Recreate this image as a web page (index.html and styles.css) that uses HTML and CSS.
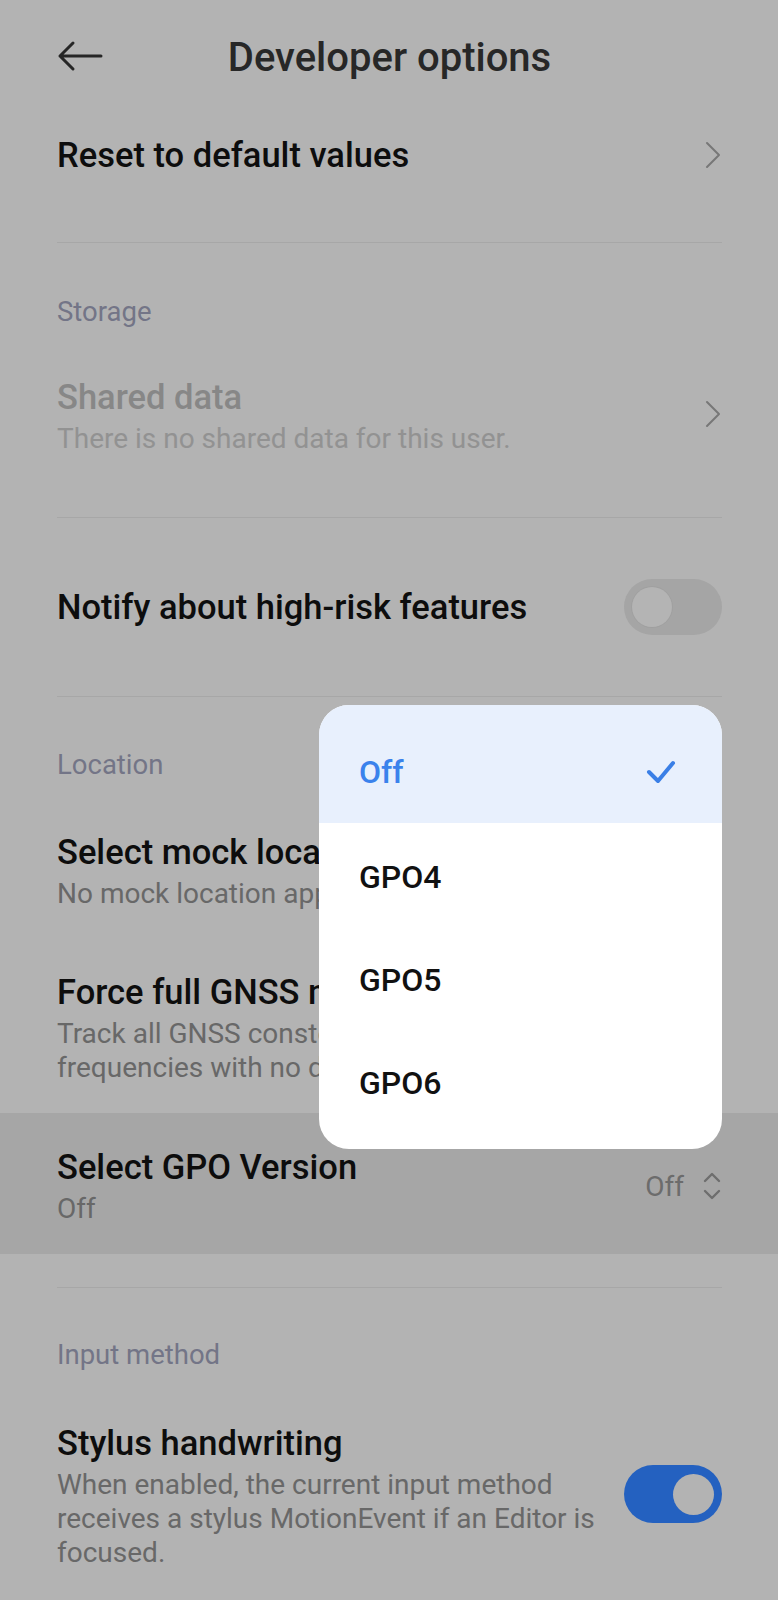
FILE: index.html
```html
<!DOCTYPE html>
<html lang="en">
<head>
<meta charset="utf-8">
<title>Developer options</title>
<link rel="stylesheet" href="styles.css">
</head>
<body>
<div class="screen">
  <header class="topbar">
    <svg class="back" width="46" height="32" viewBox="0 0 46 32" aria-hidden="true">
      <path d="M44 16H3M16 3L3 16L16 29" fill="none" stroke="#262626" stroke-width="3" stroke-linecap="round" stroke-linejoin="round"/>
    </svg>
    <h1 class="page-title">Developer options</h1>
    <span></span>
  </header>

  <div class="row row-reset">
    <div class="row-text"><div class="row-title">Reset to default values</div></div>
    <svg class="chev" width="18" height="28" viewBox="0 0 18 28" aria-hidden="true">
      <path d="M3 2L15 14L3 26" fill="none" stroke="#777" stroke-width="2" stroke-linecap="round" stroke-linejoin="round"/>
    </svg>
  </div>
  <div class="divider"></div>

  <div class="section-title sec-storage">Storage</div>
  <div class="row row-shared">
    <div class="row-text">
      <div class="row-title disabled">Shared data</div>
      <div class="row-sub disabled">There is no shared data for this user.</div>
    </div>
    <svg class="chev" width="18" height="28" viewBox="0 0 18 28" aria-hidden="true">
      <path d="M3 2L15 14L3 26" fill="none" stroke="#777" stroke-width="2" stroke-linecap="round" stroke-linejoin="round"/>
    </svg>
  </div>
  <div class="divider"></div>

  <div class="row row-notify">
    <div class="row-text"><div class="row-title">Notify about high-risk features</div></div>
    <div class="switch"><span class="knob"></span></div>
  </div>
  <div class="divider"></div>

  <div class="section-title sec-location">Location</div>
  <div class="row row-mock">
    <div class="row-text">
      <div class="row-title">Select mock location app</div>
      <div class="row-sub">No mock location app set</div>
    </div>
  </div>
  <div class="row row-gnss">
    <div class="row-text">
      <div class="row-title">Force full GNSS measurements</div>
      <div class="row-sub">Track all GNSS constellations and frequencies with no duty cycling</div>
    </div>
  </div>
  <div class="row row-gpo">
    <div class="row-text">
      <div class="row-title">Select GPO Version</div>
      <div class="row-sub">Off</div>
    </div>
    <div class="value">
      <span class="value-text">Off</span>
      <svg width="20" height="30" viewBox="0 0 20 30" aria-hidden="true">
        <path d="M3 10L10 3L17 10M3 20L10 27L17 20" fill="none" stroke="#6e6e6e" stroke-width="2.4" stroke-linecap="round" stroke-linejoin="round"/>
      </svg>
    </div>
  </div>
  <div class="divider div-input"></div>

  <div class="section-title sec-input">Input method</div>
  <div class="row row-stylus">
    <div class="row-text">
      <div class="row-title">Stylus handwriting</div>
      <div class="row-sub">When enabled, the current input method receives a stylus MotionEvent if an Editor is focused.</div>
    </div>
    <div class="switch on"><span class="knob"></span></div>
  </div>

  <div class="popup">
    <div class="opt selected">
      <span>Off</span>
      <svg width="30" height="24" viewBox="0 0 30 24" aria-hidden="true">
        <path d="M3 12L12 21L27 3" fill="none" stroke="#3a7fe6" stroke-width="4" stroke-linecap="round" stroke-linejoin="round"/>
      </svg>
    </div>
    <div class="opt"><span>GPO4</span></div>
    <div class="opt"><span>GPO5</span></div>
    <div class="opt"><span>GPO6</span></div>
  </div>
</div>
</body>
</html>
```

FILE: styles.css
```css
* { box-sizing: border-box; }

html, body {
  margin: 0;
  padding: 0;
  background: #b3b3b3;
}

body {
  font-family: Roboto, "Noto Sans", "Liberation Sans", sans-serif;
  color: #0d0d0d;
}

.screen {
  position: relative;
  width: 778px;
  min-height: 1600px;
  background: #b3b3b3;
  overflow: hidden;
}

.topbar {
  height: 112px;
  display: grid;
  grid-template-columns: 1fr auto 1fr;
  align-items: center;
  padding: 0 56px 0 57px;
}

.back { display: block; }

.page-title {
  margin: 4px 0 0;
  font-size: 40px;
  font-weight: 500;
  color: #272727;
  line-height: 50px;
}

.row {
  display: flex;
  align-items: center;
  gap: 20px;
  padding: 0 56px 0 57px;
}

.row-text {
  flex: 1;
  min-width: 0;
}

.row-title {
  font-size: 34.5px;
  font-weight: 500;
  line-height: 50px;
  color: #0d0d0d;
}

.row-sub {
  font-size: 28px;
  line-height: 34px;
  color: #686868;
}

.row-title.disabled { color: #878787; }
.row-sub.disabled { color: #929292; }

.chev { flex: none; display: block; }

.divider {
  height: 1px;
  margin: 0 56px 0 57px;
  background: #a7a7a7;
}

.section-title {
  font-size: 27.5px;
  line-height: 36px;
  color: #737587;
  padding: 0 57px;
}

.row-reset { padding-top: 18px; padding-bottom: 62px; }

.sec-storage { padding-top: 51px; }
.row-shared { margin-top: 42px; padding-bottom: 61px; }

.row-notify { height: 178px; }

.sec-location { padding-top: 50px; }
.row-mock { margin-top: 44px; }
.row-gnss { margin-top: 56px; }
.row-gnss .row-text { flex: none; max-width: 560px; }

.row-gpo {
  margin-top: 28px;
  padding-top: 29px;
  padding-bottom: 28px;
  background: #a6a6a6;
}

.value {
  display: flex;
  align-items: center;
  gap: 18px;
  margin-top: 4px;
}

.value-text {
  font-size: 28px;
  color: #6c6c6c;
}

.value svg { display: block; }

.div-input { margin-top: 33px; }

.sec-input { padding-top: 49px; }
.row-stylus { margin-top: 45px; }

.switch {
  flex: none;
  width: 98px;
  height: 56px;
  border-radius: 28px;
  background: #a5a5a5;
  display: flex;
  align-items: center;
  padding: 0 8px;
}

.knob {
  width: 40px;
  height: 40px;
  border-radius: 50%;
  background: #b4b4b4;
  box-shadow: 0 0 0 1px rgba(0, 0, 0, 0.03);
}

.switch.on {
  background: #2461c0;
  justify-content: flex-end;
  height: 58px;
  border-radius: 29px;
}

.switch.on .knob {
  width: 41px;
  height: 41px;
  background: #b3b3b3;
  box-shadow: none;
}

/* dropdown overlay */
.popup {
  position: absolute;
  top: 705px;
  left: 319px;
  width: 403px;
  padding-bottom: 17px;
  background: #ffffff;
  border-radius: 30px;
  overflow: hidden;
}

.opt {
  display: flex;
  align-items: center;
  justify-content: space-between;
  padding: 4px 46px 0 40px;
  height: 103px;
  font-size: 32px;
  font-weight: 500;
  color: #111111;
}

.opt.selected {
  height: 118px;
  padding-top: 17px;
  padding-bottom: 1px;
  background: #e8f0fd;
  color: #3a82ec;
}

.opt svg { display: block; }
```
